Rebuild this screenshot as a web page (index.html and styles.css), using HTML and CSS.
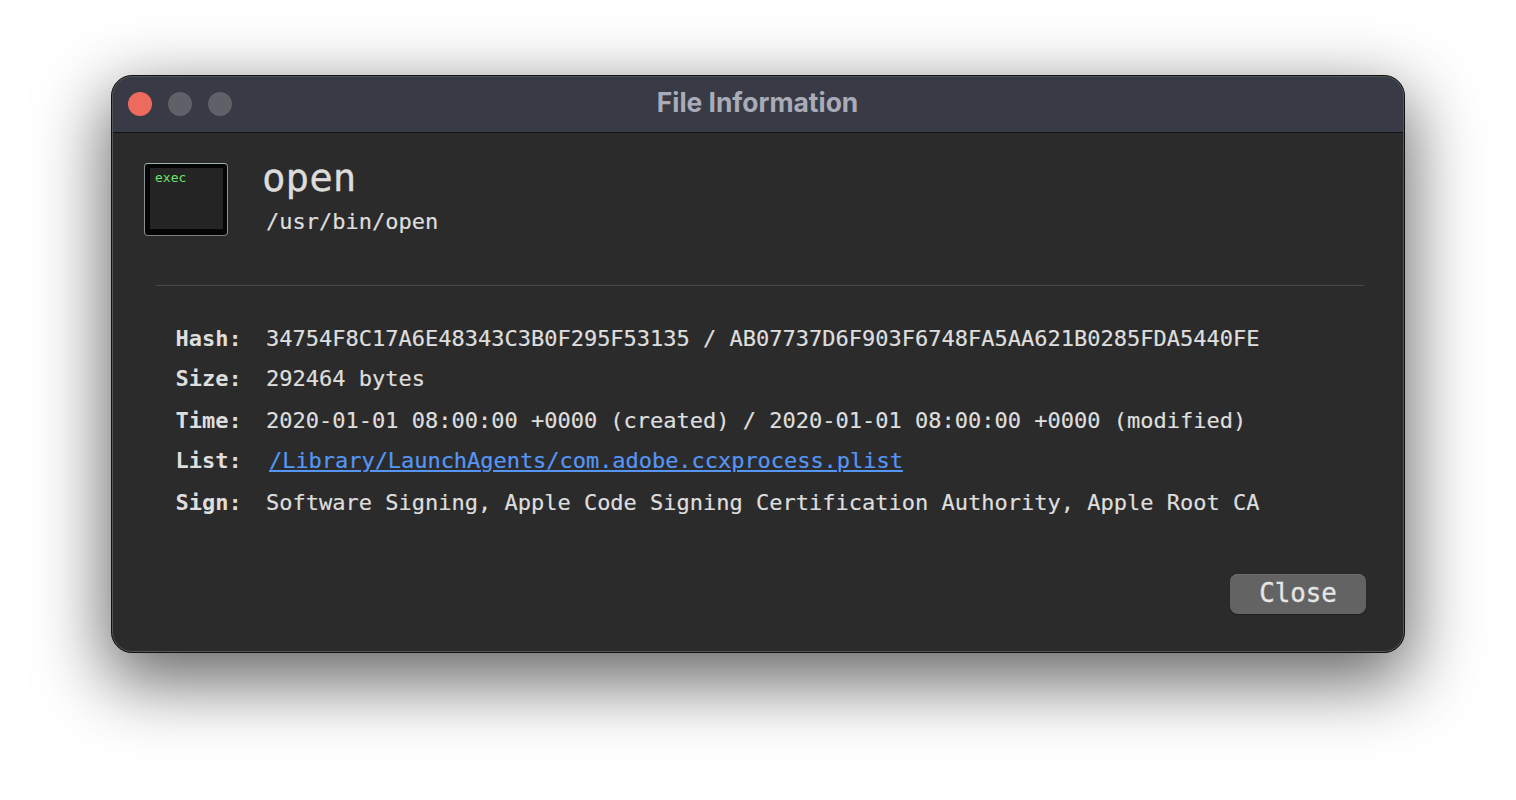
FILE: index.html
```html
<!DOCTYPE html>
<html>
  <head>
    <title>File Information</title>
    <link rel="stylesheet" href="styles.css">
  </head>
  <body>
    <div class="window">
      <div class="titlebar">
        <div class="lights">
          <span class="light light-close"></span>
          <span class="light"></span>
          <span class="light"></span>
        </div>
        <div class="window-title">File Information</div>
      </div>
      <div class="content">
        <div class="file-head">
          <div class="exec-icon"><div class="exec-screen">exec</div></div>
          <div class="file-names">
            <div class="file-name">open</div>
            <div class="file-path">/usr/bin/open</div>
          </div>
        </div>
        <div class="divider"></div>
        <div class="details">
          <div class="label">Hash:</div>
          <div class="value">34754F8C17A6E48343C3B0F295F53135 / AB07737D6F903F6748FA5AA621B0285FDA5440FE</div>
          <div class="label">Size:</div>
          <div class="value">292464 bytes</div>
          <div class="label">Time:</div>
          <div class="value">2020-01-01 08:00:00 +0000 (created) / 2020-01-01 08:00:00 +0000 (modified)</div>
          <div class="label">List:</div>
          <div class="value"><a class="link" href="#">/Library/LaunchAgents/com.adobe.ccxprocess.plist</a></div>
          <div class="label">Sign:</div>
          <div class="value">Software Signing, Apple Code Signing Certification Authority, Apple Root CA</div>
        </div>
        <div class="actions">
          <button class="close-btn">Close</button>
        </div>
      </div>
    </div>
  </body>
</html>
```

FILE: styles.css
```css
html,
body {
  height: 100%;
}

body {
  margin: 0;
  padding: 75px 0 0 111px;
  box-sizing: border-box;
  background: #fff;
  overflow: hidden;
  font-family: "DejaVu Sans Mono", monospace;
}

.window {
  width: 1294px;
  height: 578px;
  box-sizing: border-box;
  border: 1px solid #111;
  border-radius: 21px;
  background: #2b2b2b;
  box-shadow: 0 24px 70px 5px rgba(0, 0, 0, 0.6);
  overflow: hidden;
  display: flex;
  flex-direction: column;
  position: relative;
}

/* light inner edge of the window, above the titlebar */
.window::after {
  content: "";
  position: absolute;
  inset: 0;
  border: 1px solid #565656;
  border-radius: 20px;
  pointer-events: none;
}

.titlebar {
  height: 56px;
  flex: none;
  background: #383b45;
  border-bottom: 1px solid #111;
  display: flex;
  align-items: center;
  justify-content: center;
  position: relative;
}

.lights {
  position: absolute;
  left: 16px;
  top: 16px;
  display: flex;
  gap: 16px;
}

.light {
  width: 24px;
  height: 24px;
  border-radius: 50%;
  background: #5f6169;
}

.light-close {
  background: #ec6a5e;
}

.window-title {
  font-family: Inter, sans-serif;
  font-size: 26.4px;
  font-weight: 700;
  color: #a9acb8;
  margin-right: 1px;
  padding-bottom: 4px;
}

.content {
  flex: 1;
  display: flex;
  flex-direction: column;
  padding: 30px 40px 0 32px;
}

.file-head {
  display: flex;
  gap: 35px;
  height: 122px;
}

.exec-icon {
  width: 84px;
  height: 73px;
  box-sizing: border-box;
  border: 1px solid;
  border-color: #a5b3b8 #8a9296 #7d7d7d;
  border-radius: 4px;
  background: #050505;
  padding: 4px 4px 6px 5px;
}

.exec-screen {
  height: 100%;
  background: #242424;
  color: #6ee36a;
  font-size: 13px;
  line-height: 20px;
  padding-left: 5px;
}

.file-names {
  margin-top: -8px;
}

.file-name {
  font-size: 39.2px;
  line-height: 46px;
  margin-left: -1px;
  color: #dcdcdc;
  -webkit-text-stroke: 0.3px #dcdcdc;
}

.file-path {
  font-size: 22px;
  line-height: 28px;
  margin-top: 7px;
  margin-left: 3px;
  color: #dedede;
  -webkit-text-stroke: 0.2px #dedede;
}

.divider {
  height: 1px;
  background: #484848;
  margin-left: 12px;
}

.details {
  display: grid;
  grid-template-columns: 90px 1fr;
  grid-auto-rows: 40px 42px;
  line-height: 40px;
  margin: 33px 0 0 32px;
  font-size: 22px;
  color: #dedede;
}

.value {
  -webkit-text-stroke: 0.2px currentColor;
}

.label {
  font-weight: 700;
  margin-left: -0.5px;
}

.link {
  color: #5596f5;
  margin-left: 3px;
  letter-spacing: -0.04px;
}

.actions {
  display: flex;
  justify-content: flex-end;
  margin-top: 51px;
}

.close-btn {
  width: 136px;
  height: 40px;
  margin-right: -2px;
  padding: 0 0 2px;
  border: none;
  border-radius: 8px;
  background: #636363;
  box-shadow: inset 0 1px 0 #6d6d6d, 0 1px 1px #222;
  color: #e6e6e6;
  font-family: "DejaVu Sans Mono", monospace;
  font-size: 25.8px;
  -webkit-text-stroke: 0.3px #e6e6e6;
}
```
